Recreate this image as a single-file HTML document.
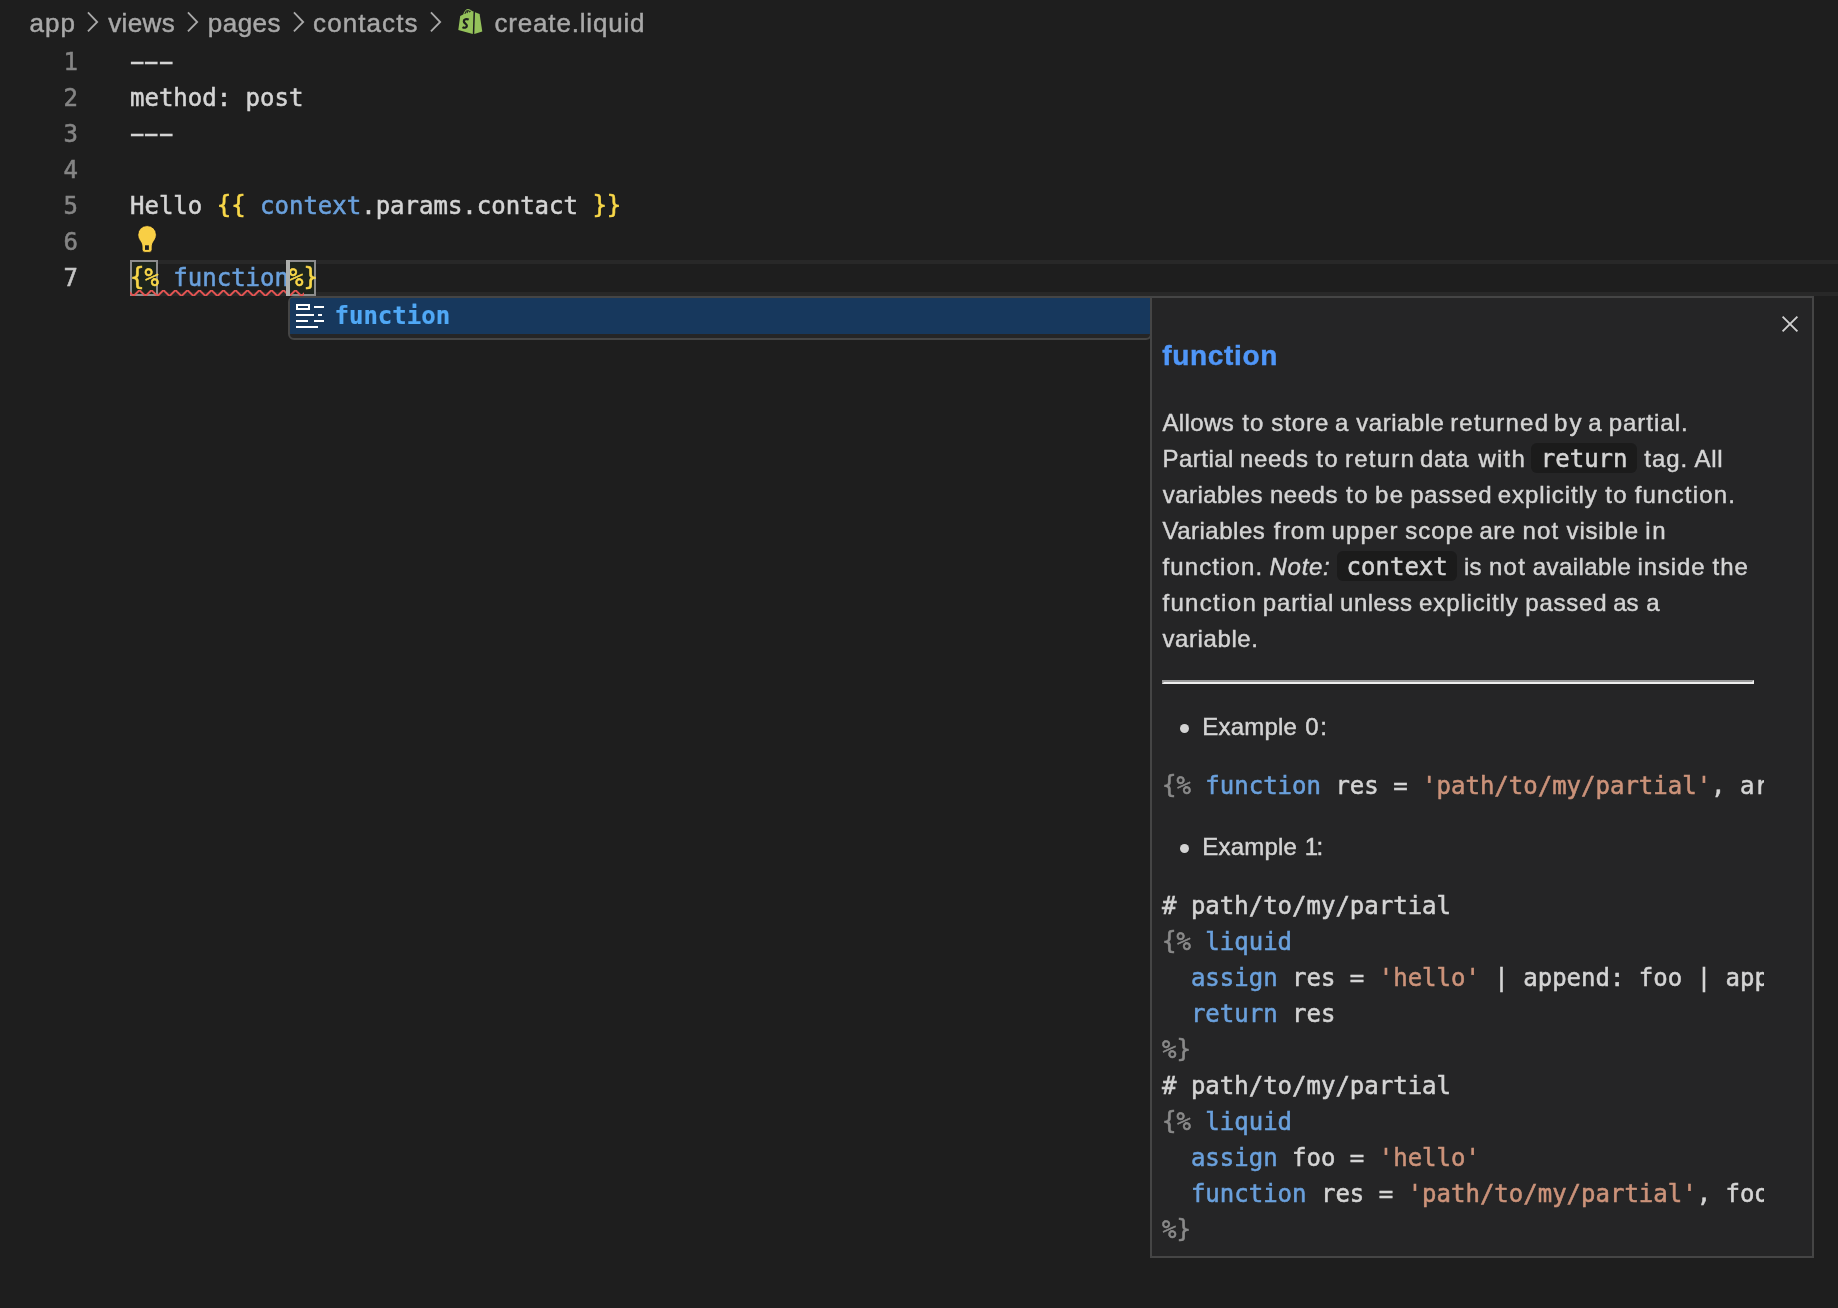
<!DOCTYPE html>
<html><head><meta charset="utf-8"><title>create.liquid</title>
<style>
html,body{margin:0;padding:0;background:#1e1e1e;}
body{width:1838px;height:1308px;position:relative;overflow:hidden;font-family:"Liberation Sans", sans-serif;}
.mono{font-family:"DejaVu Sans Mono", "Liberation Mono", monospace;-webkit-text-stroke:0.55px;}
.abs{position:absolute;}
.t{position:absolute;white-space:pre;line-height:36px;height:36px;-webkit-text-stroke:0.45px;}
.ln{position:absolute;left:0;width:78px;text-align:right;font-size:24px;line-height:36px;height:36px;}
.cl{position:absolute;font-size:24px;line-height:36px;height:36px;color:#d4d4d4;white-space:pre;}
.y{color:#f9d849}.b{color:#6aa0dc}.g{color:#8a8a8a}.s{color:#cc937a}
.br{position:relative;top:-1.3px}
.hy{display:inline-block;transform:scaleX(1.9);}
#root{position:absolute;left:0;top:0;width:1838px;height:1308px;will-change:transform;}
#clip{position:absolute;left:1152px;top:298px;width:612px;height:958px;overflow:hidden;}
.box{position:absolute;box-sizing:border-box;border:2px solid #8c8c8c;background:#1d251d;}
.ic{position:absolute;background:#1b1b1b;border-radius:6px;height:30px;}
</style></head><body><div id="root">
<svg class="abs" style="left:84.7px;top:10px" width="16" height="24" viewBox="0 0 16 24"><path d="M2.94 2.44 L12.2 12 L2.94 21.46" fill="none" stroke="#a9a9a9" stroke-width="1.8"/></svg><svg class="abs" style="left:185.0px;top:10px" width="16" height="24" viewBox="0 0 16 24"><path d="M2.94 2.44 L12.2 12 L2.94 21.46" fill="none" stroke="#a9a9a9" stroke-width="1.8"/></svg><svg class="abs" style="left:290.7px;top:10px" width="16" height="24" viewBox="0 0 16 24"><path d="M2.94 2.44 L12.2 12 L2.94 21.46" fill="none" stroke="#a9a9a9" stroke-width="1.8"/></svg><svg class="abs" style="left:427.6px;top:10px" width="16" height="24" viewBox="0 0 16 24"><path d="M2.94 2.44 L12.2 12 L2.94 21.46" fill="none" stroke="#a9a9a9" stroke-width="1.8"/></svg>
<!-- current line -->
<div class="abs" style="left:130px;top:260px;width:1708px;height:36px;box-sizing:border-box;border-top:4px solid #282828;border-bottom:4px solid #282828"></div>
<div class="box" style="left:130px;top:260px;width:28px;height:36px"></div>
<div class="box" style="left:288px;top:260px;width:28px;height:36px"></div>
<div class="ln mono" style="top:44px;color:#858585">1</div><div class="ln mono" style="top:80px;color:#858585">2</div><div class="ln mono" style="top:116px;color:#858585">3</div><div class="ln mono" style="top:152px;color:#858585">4</div><div class="ln mono" style="top:188px;color:#858585">5</div><div class="ln mono" style="top:224px;color:#858585">6</div><div class="ln mono" style="top:260px;color:#c6c6c6">7</div>
<div class="cl mono" style="top:44px;left:130px;"><span class="hy">-</span><span class="hy">-</span><span class="hy">-</span></div><div class="cl mono" style="top:80px;left:130px;">method: post</div><div class="cl mono" style="top:116px;left:130px;"><span class="hy">-</span><span class="hy">-</span><span class="hy">-</span></div><div class="cl mono" style="top:188px;left:130px;">Hello <span class="y"><span class="br">{</span><span class="br">{</span></span> <span class="b">context</span>.params.contact <span class="y"><span class="br">}</span><span class="br">}</span></span></div><div class="cl mono" style="top:260px;left:130px;"><span class="y"><span class="br">{</span>%</span> <span class="b">function</span><span class="y">%<span class="br">}</span></span></div>
<svg class="abs" style="left:130px;top:290px" width="174" height="6"><defs><pattern id="sq" width="12" height="6" patternUnits="userSpaceOnUse"><g fill="#e45452" transform="scale(2)"><polygon points="5.5,0 2.5,3 1.1,3 4.1,0"/><polygon points="4,0 6,2 6,0.6 5.4,0"/><polygon points="0,2 1,3 2.4,3 0,0.6"/></g></pattern></defs><rect width="174" height="6" fill="url(#sq)"/></svg>
<div class="abs" style="left:286px;top:260px;width:4px;height:36px;background:#aeafad"></div>
<!-- lightbulb -->
<svg class="abs" style="left:134px;top:222px" width="26" height="34" viewBox="134 222 26 34"><path d="M147.1 225.6 a9.3 9.3 0 0 1 9.3 9.3 c0 3.6 -2.6 6 -3.6 8.4 c-0.6 1.4 -0.7 3 -0.7 5 v1.2 a2.9 2.9 0 0 1 -2.9 2.9 h-4.2 a2.9 2.9 0 0 1 -2.9 -2.9 v-1.2 c0 -2 -0.1 -3.6 -0.7 -5 c-1 -2.4 -3.6 -4.8 -3.6 -8.4 a9.3 9.3 0 0 1 9.3 -9.3 z" fill="#f9cf45" stroke="#0d0d1a" stroke-width="0.8"/><rect x="145" y="245.3" width="3.9" height="4.6" fill="#1e1e1e"/></svg>
<!-- shopify icon -->
<svg class="abs" style="left:456px;top:6px" width="30" height="30" viewBox="456 6 30 30"><path d="M460.2 16 L463.2 14.6 C464 11.5 465.8 9 467.6 8.9 C469.4 8.8 471.2 9.8 472.4 11.3 L473.5 11.3 L472.8 33.9 L458.3 30.1 Z" fill="#95c25b"/><path d="M475 12.2 L479.6 14.1 L482.3 31.6 L474.3 33.9 Z" fill="#95c25b"/><path d="M464.8 13.9 C465.6 11.8 466.6 10.5 467.6 10.3 M466.9 13.1 C467.5 11.5 468.3 10.6 469.2 10.5 M469.3 12.3 C469.6 11.6 470.1 11.2 470.7 11.3" fill="none" stroke="#1e1e1e" stroke-width="1.1"/><path d="M468.7 19.6 C466.5 18.4 463.9 19.4 463.8 21.2 C463.7 23.4 467.1 23.7 466.9 25.9 C466.7 27.8 464.3 28.3 462.5 27.1" fill="none" stroke="#1e1e1e" stroke-width="2.2"/></svg>
<!-- suggest widget -->
<div class="abs" style="left:288px;top:296px;width:864px;height:44px;box-sizing:border-box;border:2px solid #454545;border-radius:6px 0 6px 6px;background:#252526"></div>
<div class="abs" style="left:290px;top:298px;width:860px;height:36px;background:#17385d;border-radius:2px 0 0 0"></div>
<svg class="abs" style="left:296px;top:304px" width="28" height="24" viewBox="0 0 28 24" fill="#ffffff"><path d="M0 0h14v6h-14z M2 2v2h10v-2z" fill-rule="evenodd"/><rect x="18" y="2" width="10" height="2"/><rect x="0" y="10" width="18" height="2"/><rect x="22" y="10" width="4" height="2"/><rect x="0" y="16" width="12" height="2"/><rect x="18" y="16" width="10" height="2"/><rect x="0" y="22" width="22" height="2"/></svg>
<div class="cl mono" style="left:334.5px;top:298px;font-weight:bold;-webkit-text-stroke:0.2px;color:#50a8f5">function</div>
<!-- details -->
<div class="abs" style="left:1150px;top:296px;width:664px;height:962px;box-sizing:border-box;border:2px solid #454545;background:#252526"></div>
<svg class="abs" style="left:1780px;top:314px" width="20" height="20" viewBox="0 0 20 20"><path d="M2.6 2.6 L17.4 17.4 M17.4 2.6 L2.6 17.4" stroke="#cfcfcf" stroke-width="1.9" fill="none"/></svg>
<div class="ic" style="left:1531.3px;top:443px;width:105.7px"></div>
<div class="ic" style="left:1337.2px;top:551px;width:119.8px"></div>
<div class="cl mono" style="left:1540.8px;top:440.7px">return</div>
<div class="cl mono" style="left:1346.6px;top:548.7px">context</div>
<div class="t" id="bc1" style="left:29.50px;top:5.49px;font-size:26px;font-weight:normal;font-style:normal;letter-spacing:1.040px;color:#a9a9a9">app</div>
<div class="t" id="bc2" style="left:108.20px;top:5.49px;font-size:26px;font-weight:normal;font-style:normal;letter-spacing:0.397px;color:#a9a9a9">views</div>
<div class="t" id="bc3" style="left:207.70px;top:5.49px;font-size:26px;font-weight:normal;font-style:normal;letter-spacing:0.515px;color:#a9a9a9">pages</div>
<div class="t" id="bc4" style="left:313.10px;top:5.49px;font-size:26px;font-weight:normal;font-style:normal;letter-spacing:1.082px;color:#a9a9a9">contacts</div>
<div class="t" id="bc5" style="left:494.50px;top:5.49px;font-size:26px;font-weight:normal;font-style:normal;letter-spacing:0.822px;color:#a9a9a9">create.liquid</div>
<div class="t" id="hd" style="left:1162.20px;top:338.30px;font-size:28px;font-weight:bold;font-style:normal;letter-spacing:0.684px;color:#4f96f8">function</div>
<div class="t" id="p1" style="left:1162.40px;top:404.68px;font-size:24px;font-weight:normal;font-style:normal;color:#d4d4d4"><span style="letter-spacing:0.410px">Allows</span><span style="letter-spacing:1.32px"> </span><span style="letter-spacing:1.132px">to</span><span style="letter-spacing:0.15px"> </span><span style="letter-spacing:0.923px">store</span><span style="letter-spacing:-0.94px"> </span><span style="letter-spacing:0.000px">a</span><span style="letter-spacing:1.18px"> </span><span style="letter-spacing:0.514px">variable</span><span style="letter-spacing:-0.93px"> </span><span style="letter-spacing:1.208px">returned</span><span style="letter-spacing:-1.92px"> </span><span style="letter-spacing:2.252px">by</span><span style="letter-spacing:-2.32px"> </span><span style="letter-spacing:0.000px">a</span><span style="letter-spacing:0.38px"> </span><span style="letter-spacing:1.005px">partial.</span></div>
<div class="t" id="p2a" style="left:1162.40px;top:440.68px;font-size:24px;font-weight:normal;font-style:normal;color:#d4d4d4"><span style="letter-spacing:0.501px">Partial</span><span style="letter-spacing:-0.60px"> </span><span style="letter-spacing:0.652px">needs</span><span style="letter-spacing:0.88px"> </span><span style="letter-spacing:1.432px">to</span><span style="letter-spacing:-0.85px"> </span><span style="letter-spacing:1.250px">return</span><span style="letter-spacing:-1.77px"> </span><span style="letter-spacing:0.546px">data</span><span style="letter-spacing:2.94px"> </span><span style="letter-spacing:1.189px">with</span></div>
<div class="t" id="p2b" style="left:1644.30px;top:440.68px;font-size:24px;font-weight:normal;font-style:normal;color:#d4d4d4"><span style="letter-spacing:0.912px">tag.</span><span style="letter-spacing:-0.05px"> </span><span style="letter-spacing:0.680px">All</span></div>
<div class="t" id="p3" style="left:1162.80px;top:476.68px;font-size:24px;font-weight:normal;font-style:normal;color:#d4d4d4"><span style="letter-spacing:0.444px">variables</span><span style="letter-spacing:0.39px"> </span><span style="letter-spacing:0.552px">needs</span><span style="letter-spacing:1.28px"> </span><span style="letter-spacing:1.532px">to</span><span style="letter-spacing:-0.75px"> </span><span style="letter-spacing:1.452px">be</span><span style="letter-spacing:-1.07px"> </span><span style="letter-spacing:0.771px">passed</span><span style="letter-spacing:-1.19px"> </span><span style="letter-spacing:0.923px">explicitly</span><span style="letter-spacing:0.91px"> </span><span style="letter-spacing:1.332px">to</span><span style="letter-spacing:0.05px"> </span><span style="letter-spacing:1.193px">function.</span></div>
<div class="t" id="p4" style="left:1162.40px;top:512.68px;font-size:24px;font-weight:normal;font-style:normal;color:#d4d4d4"><span style="letter-spacing:0.516px">Variables</span><span style="letter-spacing:1.82px"> </span><span style="letter-spacing:1.164px">from</span><span style="letter-spacing:-1.72px"> </span><span style="letter-spacing:1.202px">upper</span><span style="letter-spacing:-0.26px"> </span><span style="letter-spacing:0.976px">scope</span><span style="letter-spacing:-1.29px"> </span><span style="letter-spacing:0.430px">are</span><span style="letter-spacing:0.15px"> </span><span style="letter-spacing:1.252px">not</span><span style="letter-spacing:0.41px"> </span><span style="letter-spacing:0.793px">visible</span><span style="letter-spacing:-0.21px"> </span><span style="letter-spacing:1.668px">in</span></div>
<div class="t" id="p5a" style="left:1162.40px;top:548.68px;font-size:24px;font-weight:normal;font-style:normal;letter-spacing:1.130px;color:#d4d4d4">function.</div>
<div class="t" id="p5b" style="left:1269.60px;top:548.68px;font-size:24px;font-weight:normal;font-style:italic;letter-spacing:0.676px;color:#d4d4d4">Note:</div>
<div class="t" id="p5c" style="left:1463.90px;top:548.68px;font-size:24px;font-weight:normal;font-style:normal;color:#d4d4d4"><span style="letter-spacing:0.168px">is</span><span style="letter-spacing:0.76px"> </span><span style="letter-spacing:1.252px">not</span><span style="letter-spacing:0.01px"> </span><span style="letter-spacing:0.414px">available</span><span style="letter-spacing:-0.43px"> </span><span style="letter-spacing:0.868px">inside</span><span style="letter-spacing:0.32px"> </span><span style="letter-spacing:1.042px">the</span></div>
<div class="t" id="p6" style="left:1162.40px;top:584.68px;font-size:24px;font-weight:normal;font-style:normal;color:#d4d4d4"><span style="letter-spacing:1.327px">function</span><span style="letter-spacing:-1.04px"> </span><span style="letter-spacing:0.861px">partial</span><span style="letter-spacing:-0.76px"> </span><span style="letter-spacing:0.505px">unless</span><span style="letter-spacing:-0.07px"> </span><span style="letter-spacing:0.879px">explicitly</span><span style="letter-spacing:0.05px"> </span><span style="letter-spacing:0.791px">passed</span><span style="letter-spacing:-0.81px"> </span><span style="letter-spacing:-0.048px">as</span><span style="letter-spacing:0.98px"> </span><span style="letter-spacing:0.000px">a</span></div>
<div class="t" id="p7" style="left:1162.40px;top:620.68px;font-size:24px;font-weight:normal;font-style:normal;letter-spacing:0.607px;color:#d4d4d4">variable.</div>
<div class="t" id="e0" style="left:1202.30px;top:708.68px;font-size:24px;font-weight:normal;font-style:normal;color:#d4d4d4"><span style="letter-spacing:0.212px">Example</span><span style="letter-spacing:1.37px"> </span><span style="letter-spacing:1.652px">0:</span></div>
<div class="t" id="e1" style="left:1202.30px;top:828.68px;font-size:24px;font-weight:normal;font-style:normal;color:#d4d4d4"><span style="letter-spacing:0.212px">Example</span><span style="letter-spacing:0.97px"> </span><span style="letter-spacing:-1.748px">1:</span></div>
<div class="abs" style="left:1162px;top:680px;width:592px;height:4px;box-sizing:border-box;border-top:2px solid #9a9a9a;border-left:2px solid #9a9a9a;border-bottom:2px solid #eeeeee;border-right:2px solid #eeeeee"></div>
<div class="abs" style="left:1179.5px;top:723.7px;width:9px;height:9px;border-radius:50%;background:#d4d4d4"></div>
<div class="abs" style="left:1179.5px;top:843.7px;width:9px;height:9px;border-radius:50%;background:#d4d4d4"></div>
<div id="clip"><div style="position:absolute;left:-1152px;top:-298px">
<div class="cl mono" style="top:768px;left:1162px"><span class="g"><span class="br">{</span>%</span> <span class="b">function</span> res = <span class="s">'path/to/my/partial'</span>, ar</div>
<div class="cl mono" style="top:888px;left:1162px"># path/to/my/partial</div><div class="cl mono" style="top:924px;left:1162px"><span class="g"><span class="br">{</span>%</span> <span class="b">liquid</span></div><div class="cl mono" style="top:960px;left:1162px">  <span class="b">assign</span> res = <span class="s">'hello'</span> | append: foo | app</div><div class="cl mono" style="top:996px;left:1162px">  <span class="b">return</span> res</div><div class="cl mono" style="top:1032px;left:1162px"><span class="g">%<span class="br">}</span></span></div><div class="cl mono" style="top:1068px;left:1162px"># path/to/my/partial</div><div class="cl mono" style="top:1104px;left:1162px"><span class="g"><span class="br">{</span>%</span> <span class="b">liquid</span></div><div class="cl mono" style="top:1140px;left:1162px">  <span class="b">assign</span> foo = <span class="s">'hello'</span></div><div class="cl mono" style="top:1176px;left:1162px">  <span class="b">function</span> res = <span class="s">'path/to/my/partial'</span>, foo</div><div class="cl mono" style="top:1212px;left:1162px"><span class="g">%<span class="br">}</span></span></div>
</div></div>
</div></body></html>
